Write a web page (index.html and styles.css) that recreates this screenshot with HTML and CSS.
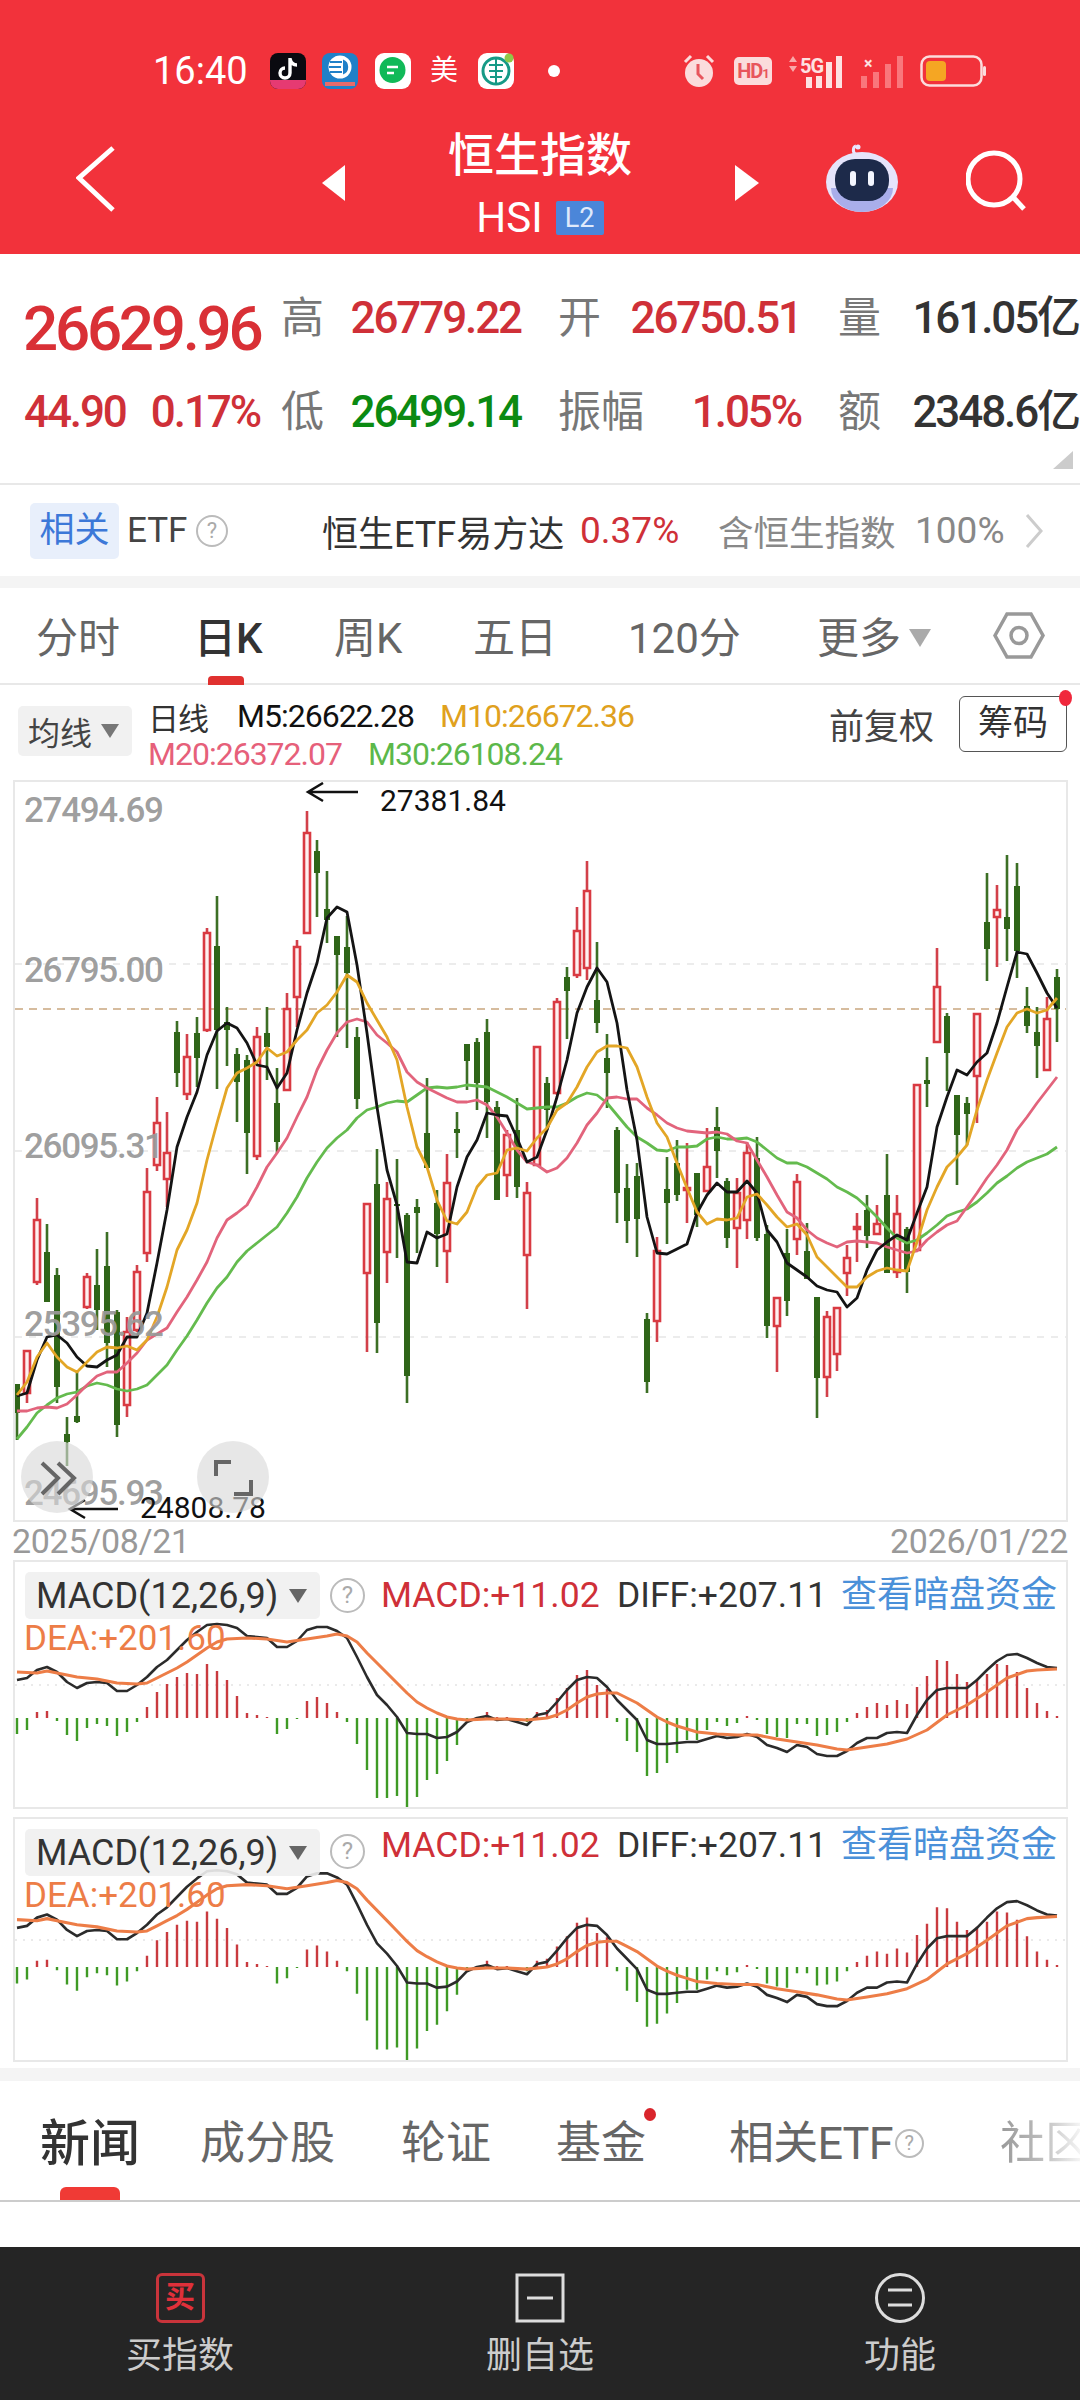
FILE: index.html
```html
<!DOCTYPE html>
<html lang="zh-CN">
<head>
<meta charset="utf-8">
<title>恒生指数</title>
<link rel="stylesheet" href="styles.css">
</head>
<body>
<div class="page">
  <header class="hero">
    <div class="status">
      <span class="time">16:40</span>
      <svg class="si si-tt" width="36" height="36" viewBox="0 0 36 36"><rect width="36" height="36" rx="8" fill="#0a0a10"/><path d="M0 27h36v1a8 8 0 0 1-8 8H8a8 8 0 0 1-8-8z" fill="#e63a72"/><path d="M20 5v15a5 5 0 1 1-5-5M20 6c1 4 4 6 7 6" fill="none" stroke="#fff" stroke-width="3.4"/></svg>
      <svg class="si si-bl" width="36" height="36" viewBox="0 0 36 36"><rect width="36" height="36" rx="8" fill="#1f80c8"/><path d="M3 29h30v4H3z" fill="#e86a6a"/><circle cx="18" cy="14" r="11.500" fill="#fff"/><path d="M8 9h12M7 14h12M8 19h12" stroke="#1f80c8" stroke-width="2"/><path d="M21 6.500a8 8 0 0 1 0 15z" fill="#1f80c8"/></svg>
      <svg class="si si-gr" width="36" height="36" viewBox="0 0 36 36"><rect width="36" height="36" rx="9" fill="#fff"/><circle cx="17.500" cy="17" r="13" fill="#10b958"/><path d="M12 14h11M12 20h7" stroke="#fff" stroke-width="2.500"/></svg>
      <span class="si-mei">美</span>
      <svg class="si si-em" width="36" height="36" viewBox="0 0 36 36"><rect width="36" height="36" rx="9" fill="#fff"/><circle cx="18" cy="18" r="13" fill="none" stroke="#169a86" stroke-width="3"/><path d="M18 5v26M11 12h14M11 18h14M12 24h12" stroke="#169a86" stroke-width="2"/><circle cx="31" cy="5" r="4.500" fill="#8fc84a"/></svg>
      <span class="si-dot"></span>
      <div class="status-right">
        <svg class="si" width="32" height="34" viewBox="0 0 32 34"><path d="M2 8l6-6M30 8l-6-6" stroke="#fbdcdc" stroke-width="3"/><circle cx="16" cy="19" r="14" fill="#fbdcdc"/><path d="M15 10v10l5 5" fill="none" stroke="#e8555c" stroke-width="3"/></svg>
        <span class="si-hd">HD<small>1</small></span>
        <svg class="si si-sig" width="60" height="34" viewBox="0 0 60 34"><path d="M2 8l4-6 4 6zM2 12l4 6 4-6z" fill="#f9a8a8"/><text class="sig-5g" x="13" y="19">5G</text><path d="M19 23h6v11h-6zM29 22h6v12h-6z" fill="#fde2e2"/><path d="M39 8h6v26h-6zM49 2h6v32h-6z" fill="#fde2e2"/></svg>
        <svg class="si si-sig2" width="44" height="34" viewBox="0 0 44 34"><text class="sig-x" x="3" y="15">×</text><path d="M0 22h6v12H0zM12 18h6v16h-6zM24 10h6v24h-6zM36 2h6v32h-6z" fill="#f9777c"/></svg>
        <svg class="si si-bat" width="66" height="32" viewBox="0 0 66 32"><rect x="1.500" y="1.500" width="60" height="29" rx="8" fill="none" stroke="#fbdcdc" stroke-width="2.500"/><rect x="6" y="6" width="20" height="20" rx="4" fill="#f5a623"/><rect x="63" y="11" width="3" height="10" rx="1.500" fill="#fbdcdc"/></svg>
      </div>
    </div>
    <nav class="nav">
      <svg class="back" width="40" height="66" viewBox="0 0 40 66"><path d="M37 2L3 32l34 32" fill="none" stroke="#fff" stroke-width="5"/></svg>
      <span class="tri tri-l"></span>
      <div class="nav-title">
        <div class="title">恒生指数</div>
        <div class="sub"><span class="hsi">HSI</span><span class="l2">L2</span></div>
      </div>
      <span class="tri tri-r"></span>
      <svg class="robot" width="74" height="68" viewBox="0 0 74 68"><path d="M31 11c-4-3-3-8 0-9" fill="none" stroke="#e9e6ff" stroke-width="3"/><circle cx="33" cy="3" r="2.500" fill="#e9e6ff"/><ellipse cx="37" cy="38" rx="36" ry="30" fill="#e6e4fb"/><path d="M6 44a31 24 0 0 0 62 0" fill="#a9aeea"/><rect x="10" y="15" width="54" height="42" rx="20" fill="#1d2a4a"/><rect x="25" y="27" width="6" height="15" rx="3" fill="#f4f6ff"/><rect x="43" y="27" width="6" height="15" rx="3" fill="#f4f6ff"/></svg>
      <svg class="search" width="62" height="62" viewBox="0 0 62 62"><circle cx="28" cy="29" r="26" fill="none" stroke="#fff" stroke-width="5"/><path d="M47 47l11 12" stroke="#fff" stroke-width="5"/></svg>
    </nav>
  </header>

  <section class="quote">
    <div class="q-cell q-big"><span class="last">26629.96</span></div>
    <div class="q-cell q-a"><span class="q-l">高</span><span class="q-v red">26779.22</span></div>
    <div class="q-cell q-b"><span class="q-l">开</span><span class="q-v red">26750.51</span></div>
    <div class="q-cell q-c"><span class="q-l">量</span><span class="q-v dark">161.05亿</span></div>
    <div class="q-cell q-chg"><span class="q-v red">44.90</span><span class="q-v red">0.17%</span></div>
    <div class="q-cell q-a"><span class="q-l">低</span><span class="q-v green">26499.14</span></div>
    <div class="q-cell q-b"><span class="q-l">振幅</span><span class="q-v red">1.05%</span></div>
    <div class="q-cell q-c"><span class="q-l">额</span><span class="q-v dark">2348.6亿</span></div>
    <span class="corner"></span>
  </section>

  <section class="etf">
    <span class="etf-tag">相关</span>
    <span class="etf-name">ETF</span>
    <span class="help help-etf">?</span>
    <span class="etf-fund">恒生ETF易方达</span>
    <span class="etf-pct">0.37%</span>
    <span class="etf-hold">含恒生指数</span>
    <span class="etf-share">100%</span>
    <svg class="etf-more" width="19" height="36" viewBox="0 0 19 36"><path d="M2 2l14 16L2 34" fill="none" stroke="#ccc" stroke-width="3"/></svg>
  </section>

  <div class="band"></div>

  <div class="ptabs">
    <span class="ptab">分时</span>
    <span class="ptab ptab-on">日K</span>
    <span class="ptab">周K</span>
    <span class="ptab">五日</span>
    <span class="ptab">120分</span>
    <span class="ptab ptab-more">更多<i class="caret caret-more"></i></span>
    <svg class="hex" width="52" height="47" viewBox="0 0 52 47"><path d="M2 23.500L14 2h24l12 21.500L38 45H14z" fill="none" stroke="#999" stroke-width="3.500"/><circle cx="26" cy="23.500" r="8" fill="none" stroke="#999" stroke-width="3.500"/></svg>
  </div>

  <div class="legend">
    <div class="selector"><span>均线</span><i class="caret caret-sel"></i></div>
    <div class="ma">
      <div class="ma-row"><span class="ma-kind">日线</span><span class="m5">M5:26622.28</span><span class="m10">M10:26672.36</span></div>
      <div class="ma-row ma-row2"><span class="m20">M20:26372.07</span><span class="m30">M30:26108.24</span></div>
    </div>
    <span class="adjust">前复权</span>
    <span class="chips">筹码<i class="chips-dot"></i></span>
  </div>

  <div class="kchart">
    <svg class="ksvg" viewBox="15 782 1051 738">
      <path class="gridline" d="M15 964H1066M15 1151H1066M15 1337H1066"/>
      <path class="priceline" d="M15 1009H1066"/>
      <path class="w-g" d="M17 1384V1440M47 1224V1302M57 1268V1403M67 1417V1466M77 1370V1423M97 1249V1330M107 1232V1367M117 1310V1437M177 1021V1087M197 1017V1087M217 896V1089M227 1007V1066M237 1048V1122M247 1055V1174M267 1007V1080M277 1068V1153M317 840V917M327 871V943M337 936V1037M347 916V1048M357 1027V1109M377 1149V1353M397 1159V1258M407 1213V1403M417 1199V1253M427 1078V1168M437 1190V1267M457 1112V1158M467 1044V1090M477 1038V1110M487 1019V1138M497 1101V1200M517 1098V1198M547 1077V1130M567 967V1039M597 942V1033M607 1034V1108M617 1127V1223M627 1164V1243M637 1163V1257M647 1313V1393M667 1157V1244M677 1140V1201M697 1173V1227M717 1107V1178M727 1178V1248M757 1137V1241M767 1225V1338M787 1229V1316M807 1223V1279M817 1297V1418M867 1195V1248M887 1154V1273M907 1227V1293M927 1057V1107M947 1013V1091M957 1095V1185M967 1097V1145M987 873V981M1007 855V961M1017 863V978M1027 987V1033M1037 1007V1078M1057 969V1042"/>
      <path class="b-g" d="M17 1384V1413M47 1252V1302M57 1275V1387M67 1434V1442M77 1416V1422M97 1285V1310M107 1266V1343M117 1312V1425M177 1032V1073M197 1033V1058M217 946V1030M227 1022V1030M237 1054V1082M247 1060V1133M267 1033V1047M277 1103V1142M317 851V873M327 909V920M337 936V955M347 947V973M357 1037V1099M377 1184V1323M397 1204V1206M407 1215V1376M417 1207V1213M427 1133V1168M437 1203V1234M457 1129V1133M467 1044V1061M477 1042V1083M487 1032V1102M497 1107V1200M517 1130V1187M547 1083V1110M567 977V991M597 1000V1023M607 1058V1073M617 1130V1193M627 1188V1221M637 1176V1219M647 1319V1382M667 1189V1203M677 1163V1195M697 1173V1215M717 1127V1151M727 1181V1238M757 1158V1238M767 1234V1326M787 1253V1301M807 1251V1279M817 1297V1378M867 1210V1236M887 1195V1273M907 1229V1272M927 1080V1084M947 1016V1053M957 1095V1135M967 1103V1114M987 922V949M1007 917V929M1017 886V951M1027 1006V1026M1037 1032V1046M1057 977V1009"/>
      <path class="w-r" d="M27 1350V1403M37 1198V1285M87 1273V1309M127 1317V1417M137 1265V1332M147 1168V1262M157 1097V1171M167 1112V1207M187 1034V1100M207 928V1032M257 1027V1160M287 993V1091M297 940V1027M307 811V933M367 1204V1352M387 1182V1283M447 1154V1283M507 1130V1197M527 1182V1309M537 1046V1165M557 998V1095M577 907V978M587 861V980M657 1237V1342M687 1143V1223M707 1128V1191M737 1178V1268M747 1142V1239M777 1298V1372M797 1174V1255M827 1311V1397M837 1307V1371M847 1245V1296M857 1213V1262M877 1205V1234M897 1195V1278M917 1085V1250M937 948V1042M977 1013V1123M997 885V967M1047 997V1070"/>
      <path class="b-r" d="M24 1351h6V1393h-6zM34 1220h6V1282h-6zM84 1277h6V1307h-6zM124 1332h6V1405h-6zM134 1272h6V1330h-6zM144 1192h6V1253h-6zM154 1123h6V1165h-6zM164 1153h6V1179h-6zM184 1057h6V1094h-6zM204 933h6V1030h-6zM254 1037h6V1156h-6zM284 1009h6V1090h-6zM294 947h6V997h-6zM304 833h6V933h-6zM364 1204h6V1273h-6zM384 1199h6V1252h-6zM444 1183h6V1251h-6zM504 1135h6V1175h-6zM524 1193h6V1255h-6zM534 1047h6V1165h-6zM554 1002h6V1093h-6zM574 931h6V975h-6zM584 891h6V968h-6zM654 1251h6V1321h-6zM684 1188h6V1190h-6zM704 1167h6V1191h-6zM734 1193h6V1228h-6zM744 1153h6V1220h-6zM774 1298h6V1326h-6zM794 1182h6V1239h-6zM824 1317h6V1377h-6zM834 1308h6V1354h-6zM844 1258h6V1273h-6zM854 1227h6V1229h-6zM874 1224h6V1234h-6zM894 1214h6V1272h-6zM914 1085h6V1250h-6zM934 987h6V1042h-6zM974 1014h6V1076h-6zM994 910h6V917h-6zM1044 1019h6V1070h-6z"/>
      <polyline class="ma30" points="17,1439 27,1427 37,1413 47,1405 57,1398 67,1394 77,1392 87,1386 97,1383 107,1385 117,1389 127,1391 137,1389 147,1385 157,1375 167,1365 177,1350 187,1336 197,1320 207,1303 217,1288 227,1277 237,1262 247,1251 257,1243 267,1235 277,1227 287,1213 297,1197 307,1178 317,1162 327,1148 337,1138 347,1130 357,1118 367,1110 377,1107 387,1103 397,1101 407,1102 417,1095 427,1088 437,1087 447,1088 457,1087 467,1085 477,1086 487,1087 497,1092 507,1097 517,1103 527,1109 537,1108 547,1107 557,1107 567,1103 577,1097 587,1093 597,1095 607,1103 617,1115 627,1127 637,1137 647,1143 657,1150 667,1151 677,1147 687,1147 697,1146 707,1139 717,1137 727,1139 737,1139 747,1138 757,1142 767,1150 777,1158 787,1163 797,1163 807,1167 817,1173 827,1179 837,1187 847,1192 857,1198 867,1207 877,1217 887,1228 897,1238 907,1243 917,1240 927,1233 937,1225 947,1216 957,1212 967,1209 977,1202 987,1193 997,1183 1007,1176 1017,1168 1027,1162 1037,1158 1047,1154 1057,1147"/>
      <polyline class="ma20" points="17,1411 27,1411 37,1408 47,1407 57,1408 67,1404 77,1395 87,1385 97,1376 107,1372 117,1372 127,1363 137,1353 147,1340 157,1334 167,1328 177,1312 187,1297 197,1280 207,1262 217,1238 227,1220 237,1213 247,1205 257,1187 267,1167 277,1153 287,1138 297,1117 307,1097 317,1070 327,1050 337,1033 347,1022 357,1019 367,1022 377,1035 387,1043 397,1052 407,1072 417,1082 427,1088 437,1093 447,1098 457,1102 467,1102 477,1100 487,1105 497,1117 507,1133 517,1150 527,1162 537,1165 547,1172 557,1168 567,1158 577,1143 587,1125 597,1113 607,1098 617,1097 627,1099 637,1099 647,1108 657,1115 667,1123 677,1128 687,1131 697,1132 707,1133 717,1132 727,1134 737,1141 747,1143 757,1160 767,1177 777,1195 787,1212 797,1218 807,1230 817,1238 827,1243 837,1247 847,1242 857,1241 867,1242 877,1243 887,1247 897,1250 907,1253 917,1251 927,1240 937,1232 947,1225 957,1221 967,1207 977,1193 987,1178 997,1165 1007,1150 1017,1130 1027,1117 1037,1103 1047,1090 1057,1077"/>
      <polyline class="ma5" points="17,1396 27,1393 37,1360 47,1337 57,1335 67,1343 77,1357 87,1366 97,1367 107,1360 117,1355 127,1337 137,1337 147,1313 157,1263 167,1210 177,1147 187,1117 197,1092 207,1055 217,1031 227,1023 237,1028 247,1043 257,1065 267,1067 277,1088 287,1073 297,1030 307,993 317,963 327,918 337,907 347,912 357,965 367,1033 377,1107 387,1170 397,1205 407,1262 417,1263 427,1232 437,1238 447,1234 457,1187 467,1157 477,1140 487,1113 497,1115 507,1116 517,1138 527,1162 537,1157 547,1130 557,1097 567,1060 577,1013 587,987 597,968 607,982 617,1023 627,1090 637,1140 647,1217 657,1253 667,1254 677,1249 687,1244 697,1213 707,1195 717,1183 727,1192 737,1192 747,1181 757,1193 767,1230 777,1242 787,1263 797,1270 807,1277 817,1286 827,1290 837,1292 847,1307 857,1298 867,1270 877,1250 887,1242 897,1235 907,1240 917,1213 927,1187 937,1127 947,1097 957,1070 967,1075 977,1062 987,1053 997,1023 1007,987 1017,952 1027,954 1037,973 1047,993 1057,1008"/>
      <polyline class="ma10" points="17,1395 27,1382 37,1357 47,1343 57,1357 67,1367 77,1372 87,1362 97,1352 107,1347 117,1348 127,1346 137,1350 147,1340 157,1317 167,1287 177,1250 187,1230 197,1203 207,1160 217,1123 227,1088 237,1073 247,1068 257,1062 267,1048 277,1056 287,1052 297,1040 307,1030 317,1013 327,1005 337,992 347,975 357,982 367,1003 377,1020 387,1037 397,1060 407,1107 417,1147 427,1167 437,1200 447,1221 457,1224 467,1212 477,1187 487,1175 497,1173 507,1150 517,1148 527,1151 537,1138 547,1128 557,1110 567,1103 577,1087 587,1067 597,1052 607,1046 617,1046 627,1048 637,1067 647,1097 657,1123 667,1137 677,1163 687,1188 697,1212 707,1224 717,1219 727,1220 737,1218 747,1197 757,1194 767,1205 777,1217 787,1227 797,1224 807,1235 817,1257 827,1267 837,1277 847,1287 857,1287 867,1277 877,1271 887,1268 897,1270 907,1271 917,1242 927,1210 937,1187 947,1167 957,1157 967,1145 977,1110 987,1080 997,1053 1007,1027 1017,1013 1027,1009 1037,1013 1047,1010 1057,998"/>
      <text class="axis" x="24" y="822">27494.69</text>
      <text class="axis" x="24" y="982">26795.00</text>
      <text class="axis" x="24" y="1158">26095.31</text>
      <text class="axis" x="24" y="1336">25395.62</text>
      <text class="axis" x="24" y="1505">24695.93</text>
      <path class="arrow" d="M358 792H308M323 783L308 792L323 801"/>
      <text class="extreme" x="380" y="811">27381.84</text>
      <path class="arrow" d="M118 1509H70M85 1500L70 1509L85 1518"/>
      <text class="extreme" x="140" y="1518">24808.78</text>
      <circle class="fab" cx="57" cy="1477" r="36"/>
      <circle class="fab" cx="233" cy="1477" r="36"/>
      <path class="fab-i" d="M42 1463L58 1478L42 1494M58 1463L74 1478L58 1494M231 1462H216V1476M251 1480V1494H234"/>
    </svg>
  </div>

  <div class="dates"><span>2025/08/21</span><span>2026/01/22</span></div>

  <section class="macd macd-1">
    <svg class="msvg" viewBox="15 1562 1051 245">
      <path class="dots" d="M15 1685H1066"/>
      <g id="macd-data">
        <path class="bar-g" d="M17 1718v16M27 1718v12M57 1718v3M67 1718v17M77 1718v23M87 1718v10M97 1718v6M107 1718v8M117 1718v18M127 1718v14M137 1718v4M277 1718v16M287 1718v11M297 1718v1M347 1718v4M357 1718v26M367 1718v52M377 1718v80M387 1718v80M397 1718v78M407 1718v92M417 1718v79M427 1718v62M437 1718v56M447 1718v43M457 1718v27M467 1718v3M517 1718v1M527 1718v4M617 1718v4M627 1718v23M637 1718v34M647 1718v58M657 1718v55M667 1718v45M677 1718v35M687 1718v22M697 1718v22M707 1718v12M717 1718v4M727 1718v8M737 1718v5M757 1718v2M767 1718v16M777 1718v19M787 1718v20M797 1718v6M807 1718v6M817 1718v18M827 1718v17M837 1718v14M847 1718v4"/>
        <path class="bar-r" d="M37 1718v-6M47 1718v-7M147 1718v-11M157 1718v-26M167 1718v-34M177 1718v-41M187 1718v-45M197 1718v-44M207 1718v-54M217 1718v-47M227 1718v-38M237 1718v-22M247 1718v-5M257 1718v-3M267 1718v-1M307 1718v-17M317 1718v-21M327 1718v-15M337 1718v-6M477 1718v-1M487 1718v-6M497 1718v-1M507 1718v-1M537 1718v-6M547 1718v-8M557 1718v-20M567 1718v-30M577 1718v-43M587 1718v-48M597 1718v-33M607 1718v-29M747 1718v-2M857 1718v-5M867 1718v-11M877 1718v-15M887 1718v-13M897 1718v-18M907 1718v-14M917 1718v-31M927 1718v-42M937 1718v-58M947 1718v-57M957 1718v-44M967 1718v-36M977 1718v-39M987 1718v-44M997 1718v-54M1007 1718v-53M1017 1718v-46M1027 1718v-30M1037 1718v-15M1047 1718v-7M1057 1718v-2"/>
        <polyline class="diff" points="17,1680 27,1678 37,1670 47,1667 57,1672 67,1682 77,1688 87,1683 97,1682 107,1683 117,1691 127,1691 137,1685 147,1677 157,1667 167,1660 177,1650 187,1640 197,1632 207,1625 217,1624 227,1625 237,1628 247,1636 257,1637 267,1638 277,1647 287,1647 297,1641 307,1630 317,1627 327,1627 337,1631 347,1638 357,1657 367,1677 377,1695 387,1705 397,1717 407,1733 417,1734 427,1734 437,1738 447,1737 457,1732 467,1722 477,1718 487,1716 497,1720 507,1719 517,1722 527,1725 537,1715 547,1713 557,1702 567,1690 577,1680 587,1677 597,1678 607,1687 617,1700 627,1710 637,1720 647,1740 657,1744 667,1744 677,1743 687,1742 697,1742 707,1739 717,1736 727,1738 737,1737 747,1734 757,1737 767,1745 777,1748 787,1752 797,1745 807,1747 817,1754 827,1756 837,1756 847,1751 857,1743 867,1738 877,1738 887,1733 897,1732 907,1733 917,1715 927,1700 937,1690 947,1688 957,1688 967,1688 977,1680 987,1670 997,1661 1007,1655 1017,1654 1027,1658 1037,1663 1047,1667 1057,1668"/>
        <polyline class="dea" points="17,1672 37,1673 47,1671 57,1673 77,1677 97,1679 117,1683 137,1684 147,1683 157,1678 167,1673 177,1668 187,1662 197,1655 207,1648 217,1642 227,1639 247,1638 267,1639 287,1642 307,1639 327,1636 337,1634 347,1636 357,1642 367,1653 377,1663 387,1673 397,1683 407,1693 417,1702 427,1708 437,1713 447,1717 457,1719 467,1720 487,1719 507,1719 527,1720 547,1718 557,1715 567,1710 577,1703 587,1697 597,1694 607,1693 617,1693 627,1698 637,1703 647,1710 657,1717 667,1722 677,1726 687,1729 697,1732 717,1734 737,1735 757,1735 777,1739 797,1742 817,1745 837,1749 847,1750 867,1747 887,1744 907,1739 927,1730 947,1715 967,1705 987,1692 1007,1678 1027,1671 1037,1670 1057,1669"/>
      </g>
    </svg>
    <div class="m-head">
      <div class="m-sel"><span>MACD(12,26,9)</span><i class="caret caret-m"></i></div>
      <span class="help help-m">?</span>
      <span class="m-v m-macd">MACD:+11.02</span>
      <span class="m-v m-diff">DIFF:+207.11</span>
      <span class="m-link">查看暗盘资金</span>
    </div>
    <div class="m-dea">DEA:+201.60</div>
  </section>

  <section class="macd macd-2">
    <svg class="msvg" viewBox="15 1819 1051 241">
      <path class="dots" d="M15 1940H1066"/>
      <use href="#macd-data" transform="matrix(1 0 0 1.03 0 197.5)"/>
    </svg>
    <div class="m-head">
      <div class="m-sel"><span>MACD(12,26,9)</span><i class="caret caret-m"></i></div>
      <span class="help help-m">?</span>
      <span class="m-v m-macd">MACD:+11.02</span>
      <span class="m-v m-diff">DIFF:+207.11</span>
      <span class="m-link">查看暗盘资金</span>
    </div>
    <div class="m-dea">DEA:+201.60</div>
  </section>

  <div class="band band-2"></div>

  <div class="ntabs">
    <span class="ntab ntab-on">新闻</span>
    <span class="ntab">成分股</span>
    <span class="ntab">轮证</span>
    <span class="ntab ntab-dot">基金</span>
    <span class="ntab ntab-etf">相关ETF<span class="help help-n">?</span></span>
    <span class="ntab ntab-fade">社区</span>
  </div>

  <div class="blank"></div>

  <footer class="actions">
    <div class="action">
      <span class="a-buy">买</span>
      <span class="a-label">买指数</span>
    </div>
    <div class="action">
      <svg width="50" height="50" viewBox="0 0 50 50"><rect x="2" y="2" width="46" height="46" fill="none" stroke="#ddd" stroke-width="3"/><path d="M12 25h26" stroke="#ddd" stroke-width="3"/></svg>
      <span class="a-label">删自选</span>
    </div>
    <div class="action">
      <svg width="52" height="50" viewBox="0 0 52 50"><circle cx="26" cy="25" r="23.500" fill="none" stroke="#ddd" stroke-width="3"/><path d="M14 17h24M14 32h24" stroke="#ddd" stroke-width="3"/></svg>
      <span class="a-label">功能</span>
    </div>
  </footer>
</div>
</body>
</html>
```

FILE: styles.css
```css
* { box-sizing: border-box; }
html, body { margin: 0; padding: 0; background: #fff; }
body { font-family: Roboto, "Noto Sans CJK SC", sans-serif; color: #333; }
.page { width: 1080px; height: 2400px; overflow: hidden; display: flex; flex-direction: column; }
i { font-style: normal; }

/* header */
.hero { height: 254px; background: #f2323b; color: #fff; flex: none; padding-top: 53px; }
.status { display: flex; align-items: center; height: 36px; padding-left: 153px; }
.time { font-size: 38px; width: 117px; line-height: 36px; }
.si { display: block; flex: none; }
.si-bl { margin-left: 16px; }
.si-gr { margin-left: 17px; }
.si-mei { font-size: 28px; width: 28px; margin-left: 19px; line-height: 36px; }
.si-em { margin-left: 20px; }
.si-dot { width: 12px; height: 12px; border-radius: 50%; background: #fff; margin-left: 34px; }
.status-right { margin-left: auto; display: flex; align-items: center; padding-right: 94px; }
.si-hd { width: 38px; height: 28px; background: #fbdcdc; border-radius: 5px; color: #e8555c; font: 700 20px/28px Roboto, sans-serif; text-align: center; margin-left: 19px; letter-spacing: -1px; }
.si-hd small { font-size: 13px; }
.si-sig { margin-left: 15px; }
.si-sig2 { margin-left: 14px; }
.si-bat { margin-left: 15px; }
.sig-5g { font: 700 20px Roboto, sans-serif; fill: #fde2e2; letter-spacing: -1px; }
.sig-x { font: 700 16px Roboto, sans-serif; fill: #fde2e2; }

.nav { display: flex; align-items: flex-start; height: 110px; margin-top: 41px; padding-left: 76px; }
.back { margin-top: 16px; flex: none; }
.tri { width: 0; height: 0; border-top: 18px solid transparent; border-bottom: 18px solid transparent; margin-top: 35px; flex: none; }
.tri-l { border-right: 23px solid #fff; margin-left: 206px; }
.tri-r { border-left: 24px solid #fff; }
.nav-title { width: 390px; text-align: center; }
.title { font-size: 46px; line-height: 50px; font-weight: 500; }
.sub { display: flex; justify-content: center; align-items: center; margin-top: 20px; gap: 13px; height: 36px; }
.hsi { font-size: 42px; line-height: 36px; }
.l2 { width: 48px; height: 34px; background: #4b86d9; color: #dfe9fb; font-size: 27px; line-height: 34px; text-align: center; border-radius: 2px; }
.robot { margin-left: 66px; margin-top: 14px; flex: none; }
.search { margin-left: 67px; margin-top: 20px; flex: none; }

/* quote */
.quote { flex: none; height: 231px; padding: 18px 0 25px 26px; display: grid; grid-template-columns: 255px 277px 280px 241px; grid-template-rows: 92px 96px; position: relative; border-bottom: 2px solid #e8e8e8; }
.q-cell { display: flex; justify-content: space-between; align-items: center; }
.q-big { align-items: flex-start; padding-top: 26px; margin-left: -3px; }
.last { font-size: 62px; line-height: 62px; font-weight: 500; color: #d93036; letter-spacing: -3.300px; }
.q-a { padding-right: 37px; }
.q-b { padding-right: 37px; }
.q-chg { margin-left: -2px; padding-right: 21px; }
.q-l { font-size: 43px; color: #777; line-height: 52px; }
.q-v { font-size: 44px; line-height: 52px; font-weight: 500; letter-spacing: -2.100px; }
.red { color: #cf3038; }
.green { color: #0b8a12; }
.dark { color: #333; }
.corner { position: absolute; right: 7px; bottom: 14px; width: 20px; height: 18px; background: #ccc; clip-path: polygon(100% 0, 100% 100%, 0 100%); }

/* etf row */
.etf { flex: none; height: 91px; display: flex; align-items: center; padding-left: 30px; font-size: 36px; }
.etf-tag { width: 89px; height: 56px; line-height: 56px; text-align: center; background: #e8effb; color: #3c78d8; border-radius: 5px; font-size: 35px; }
.etf-name { margin-left: 8px; color: #444; width: 69px; font-size: 35px; }
.help { display: inline-block; border: 2px solid #bbb; border-radius: 50%; color: #aaa; text-align: center; flex: none; }
.help-etf { width: 32px; height: 32px; line-height: 28px; font-size: 22px; }
.etf-fund { margin-left: 94px; color: #333; width: 258px; white-space: nowrap; }
.etf-pct { color: #cf3038; width: 138px; font-size: 37px; }
.etf-hold { color: #888; width: 197px; font-size: 35.500px; white-space: nowrap; }
.etf-share { color: #888; width: 110px; font-size: 37px; }
.etf-more { flex: none; }

.band { flex: none; height: 12px; background: #f4f4f4; }
.band-2 { margin-top: 6px; height: 13px; }

/* period tabs */
.ptabs { flex: none; height: 97px; display: grid; grid-template-columns: 158px 140px 139px 155px 189px 176px 52px; padding: 6px 0 0 36px; align-items: center; border-bottom: 2px solid #e8e8e8; font-size: 42px; color: #666; }
.ptab { position: relative; display: block; line-height: 50px; white-space: nowrap; }
.ptab-on { color: #333; font-weight: 500; }
.ptab-on::after { content: ""; position: absolute; left: 14px; bottom: -21px; width: 36px; height: 9px; border-radius: 4px 4px 0 0; background: #e0312f; }
.caret { display: inline-block; width: 0; height: 0; border-left-style: solid; border-right-style: solid; border-top-style: solid; border-left-color: transparent; border-right-color: transparent; }
.caret-more { border-left-width: 11px; border-right-width: 11px; border-top-width: 18px; border-top-color: #aaa; margin-left: 8px; vertical-align: 6px; }
.hex { display: block; margin-top: -6px; }

/* legend */
.legend { flex: none; height: 95px; display: flex; align-items: flex-start; padding-left: 18px; }
.selector { margin-top: 21px; width: 114px; height: 50px; background: #f1f1f1; border-radius: 5px; display: flex; align-items: center; padding-left: 10px; font-size: 32px; color: #444; gap: 9px; flex: none; }
.caret-sel { border-left-width: 9px; border-right-width: 9px; border-top-width: 14px; border-top-color: #777; }
.ma { margin-left: 16px; padding-top: 12px; flex: none; width: 640px; }
.ma-row { display: flex; height: 38px; align-items: center; font-size: 32px; letter-spacing: -1px; white-space: nowrap; }
.ma-kind { width: 89px; color: #333; font-size: 31px; }
.m5 { color: #111; width: 203px; }
.m10 { color: #e0a11e; }
.m20 { color: #e6607a; width: 220px; }
.m30 { color: #5cb84a; }
.adjust { font-size: 35px; color: #444; margin-left: 41px; margin-top: 18px; line-height: 50px; flex: none; }
.chips { position: relative; margin-left: 25px; margin-top: 11px; width: 108px; height: 56px; border: 1px solid #555; border-radius: 6px; font-size: 35px; text-align: center; line-height: 54px; color: #333; flex: none; }
.chips-dot { position: absolute; right: -6px; top: -7px; width: 13px; height: 16px; border-radius: 50%; background: #f0283c; }

/* k chart */
.kchart { flex: none; height: 742px; margin-left: 13px; width: 1055px; border: 2px solid #e8e8e8; }
.ksvg { display: block; width: 1051px; height: 738px; }
.gridline { stroke: #e6e6e6; stroke-width: 1.500; stroke-dasharray: 7 7; fill: none; }
.priceline { stroke: #c9a67f; stroke-width: 1.500; stroke-dasharray: 8 6; fill: none; }
.w-g { stroke: #3c6f25; stroke-width: 2.600; fill: none; }
.b-g { stroke: #2f6518; stroke-width: 6; fill: none; }
.w-r { stroke: #d2404a; stroke-width: 2.600; fill: none; }
.b-r { stroke: #d93a42; stroke-width: 2.600; fill: #fdf0f0; }
.ma5, .ma10, .ma20, .ma30 { fill: none; stroke-width: 2.800; stroke-linejoin: round; }
.ma5 { stroke: #141414; }
.ma10 { stroke: #e3a626; }
.ma20 { stroke: #e2647c; }
.ma30 { stroke: #64bb4e; }
.axis { font: 500 35px Roboto, sans-serif; letter-spacing: -1.300px; fill: #999; fill-opacity: .95; }
.extreme { font: 400 30px Roboto, sans-serif; fill: #111; }
.arrow { stroke: #111; stroke-width: 2.500; fill: none; }
.fab { fill: #d8d8d8; fill-opacity: .62; }
.fab-i { stroke: #666; stroke-width: 4; fill: none; }

.dates { flex: none; height: 38px; padding: 0 12px; display: flex; justify-content: space-between; align-items: center; font-size: 34px; color: #999; letter-spacing: -.3px; }

/* macd */
.macd { flex: none; position: relative; margin-left: 13px; width: 1055px; border: 2px solid #e8e8e8; }
.macd-1 { height: 249px; }
.macd-2 { height: 245px; margin-top: 8px; }
.msvg { position: absolute; left: 0; top: 0; width: 1051px; }
.macd-1 .msvg { height: 245px; }
.macd-2 .msvg { height: 241px; }
.dots { stroke: #e4e4e4; stroke-width: 1.500; stroke-dasharray: 2 6; fill: none; }
.bar-g { stroke: #3f9a25; stroke-width: 2.400; fill: none; }
.bar-r { stroke: #c93a3f; stroke-width: 2.400; fill: none; }
.diff { fill: none; stroke: #2b2b2b; stroke-width: 2.600; stroke-linejoin: round; }
.dea { fill: none; stroke: #ed7d47; stroke-width: 3; stroke-linejoin: round; }
.m-head { position: relative; display: flex; align-items: flex-start; padding: 10px 0 0 10px; white-space: nowrap; }
.m-sel { width: 295px; height: 47px; background: rgba(240,240,240,.9); border-radius: 5px; display: flex; align-items: center; padding-left: 11px; font-size: 36px; color: #333; flex: none; }
.caret-m { margin-left: 11px; border-left-width: 9px; border-right-width: 9px; border-top-width: 14px; border-top-color: #666; }
.help-m { width: 35px; height: 35px; line-height: 31px; font-size: 24px; margin-left: 10px; margin-top: 6px; }
.m-v { font-size: 35.500px; line-height: 47px; }
.m-macd { color: #cf3038; margin-left: 16px; width: 236px; }
.m-diff { color: #333; width: 224px; }
.m-link { color: #4a90d9; font-size: 36px; line-height: 47px; }
.m-dea { position: relative; font-size: 35px; line-height: 40px; color: #ed7d47; margin-left: 9px; }
.macd-2 .m-v, .macd-2 .m-link { margin-top: -7px; }
.macd-2 .help-m { margin-top: 5px; }

/* news tabs */
.ntabs { flex: none; height: 121px; padding: 6px 0 0 40px; display: grid; grid-template-columns: 160px 201px 155px 173px 271px 80px; align-items: center; border-bottom: 2px solid #ccc; font-size: 45px; color: #666; }
.ntab { position: relative; display: block; white-space: nowrap; line-height: 60px; }
.ntab-on { font-size: 50px; color: #333; font-weight: 500; }
.ntab-on::after { content: ""; position: absolute; left: 20px; bottom: -26px; width: 60px; height: 13px; border-radius: 6px 6px 0 0; background: #f03a35; }
.ntab-dot::after { content: ""; position: absolute; left: 88px; top: -6px; width: 12px; height: 13px; border-radius: 50%; background: #d9252c; }
.ntab-etf { display: flex; align-items: center; letter-spacing: -.8px; }
.help-n { width: 29px; height: 29px; line-height: 25px; font-size: 20px; margin-left: 2px; letter-spacing: 0; }
.ntab-fade { width: 80px; overflow: visible; background: linear-gradient(90deg, #999 0%, #bbb 50%, #f4f4f4 100%); -webkit-background-clip: text; background-clip: text; color: transparent; }
.blank { flex: none; height: 45px; }

/* bottom actions */
.actions { flex: 1; background: #252525; display: grid; grid-template-columns: repeat(3, 1fr); padding-top: 26px; align-items: start; }
.action { display: flex; flex-direction: column; align-items: center; color: #ccc; }
.action svg { display: block; }
.a-buy { width: 49px; height: 50px; border: 3px solid #c9343b; border-radius: 6px; color: #e0303a; font-size: 30px; font-weight: 700; line-height: 42px; text-align: center; }
.a-label { font-size: 36px; line-height: 50px; margin-top: 8px; color: #ccc; }
```
